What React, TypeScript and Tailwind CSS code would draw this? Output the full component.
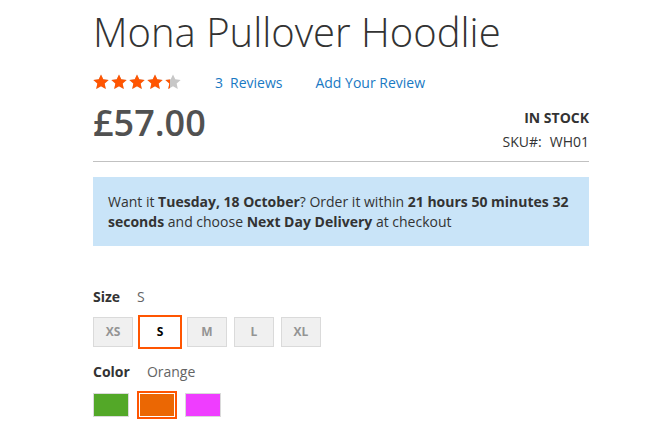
import React from "react";

const sizes = ["XS", "S", "M", "L", "XL"];
const colors = [
  { name: "Green", hex: "bg-[#53a828]" },
  { name: "Orange", hex: "bg-[#eb6703]" },
  { name: "Purple", hex: "bg-[#ef3dff]" },
];

function Star({ className }: { className: string }) {
  return (
    <svg viewBox="0 0 24 24" className={className}>
      <path
        d="M12 .6l3.4 7.4 8.1.9-6 5.5 1.7 8L12 18.3l-7.2 4.1 1.7-8-6-5.5 8.1-.9z"
        fill="currentColor"
      />
    </svg>
  );
}

function Rating({ percent }: { percent: number }) {
  return (
    <div className="relative h-4 w-[88px]">
      <div className="flex gap-[2px] text-[#c7c7c7]">
        {[0, 1, 2, 3, 4].map((i) => (
          <Star key={i} className="h-4 w-4 shrink-0" />
        ))}
      </div>
      <div
        className="absolute left-0 top-0 h-4 overflow-hidden"
        style={{ width: `${percent}%` }}
      >
        <div className="flex w-[88px] gap-[2px] text-[#ff5501]">
          {[0, 1, 2, 3, 4].map((i) => (
            <Star key={i} className="h-4 w-4 shrink-0" />
          ))}
        </div>
      </div>
    </div>
  );
}

export default function App() {
  return (
    <div className="min-h-[443px] bg-white font-['Open_Sans',sans-serif] text-[14px] text-[#333]">
      <div className="ml-[93px] w-[496px] pt-[10px]">
        <h1 className="text-[40px] font-light leading-[44px] text-[#333]">
          Mona Pullover Hoodlie
        </h1>

        <div className="mt-[18px] flex h-5 items-center">
          <Rating percent={87} />
          <a className="ml-[34px] text-[#1979c3]">
            3<span className="ml-[7px]">Reviews</span>
          </a>
          <a className="ml-[33px] text-[#1979c3]">Add Your Review</a>
        </div>

        <div className="mt-[13px] flex items-start justify-between border-b border-[#c1c1c1] pb-[9px]">
          <span className="text-[36px] font-semibold leading-[36px] text-[#515151]">
            £57.00
          </span>
          <div className="flex flex-col items-end pt-[3px] leading-5">
            <span className="font-bold uppercase">In stock</span>
            <span className="mt-1">
              SKU#:<span className="ml-[8px]">WH01</span>
            </span>
          </div>
        </div>

        <div className="mt-[15px] bg-[#c9e4f8] px-[15px] pb-[14px] pt-[15px] leading-5">
          Want it <b>Tuesday, 18 October</b>? Order it within{" "}
          <b>21 hours 50 minutes 32 seconds</b> and choose{" "}
          <b>Next Day Delivery</b> at checkout
        </div>

        <div className="mt-[41px] flex leading-5">
          <span className="font-bold">Size</span>
          <span className="pl-[17px] text-[#646464]">S</span>
        </div>
        <div className="mt-[10px] flex gap-[7px]">
          {sizes.map((s) =>
            s === "S" ? (
              <div
                key={s}
                className="flex h-[30px] w-[40px] items-center justify-center border border-white bg-white text-[12px] font-bold text-black outline-2 outline-[#ff5501]"
              >
                {s}
              </div>
            ) : (
              <div
                key={s}
                className="flex h-[30px] w-[40px] items-center justify-center border border-[#dadada] bg-[#f0f0f0] text-[12px] font-bold text-[#949494]"
              >
                {s}
              </div>
            )
          )}
        </div>

        <div className="mt-[15px] flex leading-5">
          <span className="font-bold">Color</span>
          <span className="pl-[17px] text-[#646464]">Orange</span>
        </div>
        <div className="mt-[11px] flex gap-[10px]">
          {colors.map((c) =>
            c.name === "Orange" ? (
              <div
                key={c.name}
                className={`h-[24px] w-[36px] border border-white outline-2 outline-[#ff5501] ${c.hex}`}
              />
            ) : (
              <div
                key={c.name}
                className={`h-[24px] w-[36px] border border-[#dadada] ${c.hex}`}
              />
            )
          )}
        </div>
      </div>
    </div>
  );
}
